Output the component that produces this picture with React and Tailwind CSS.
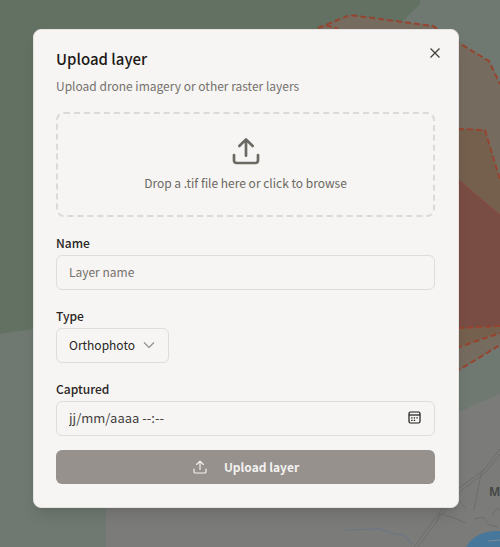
import React, { useState } from 'react';

const inputStyles = 'h-[35px] w-full rounded-md border border-[#dfddda] bg-transparent px-3 pb-[2px] text-[#292524] outline-none';

function UploadIcon({ className, strokeWidth = 2 }) {
  return (
    <svg className={className} viewBox="0 0 24 24" fill="none" stroke="currentColor" strokeWidth={strokeWidth} strokeLinecap="round" strokeLinejoin="round" aria-hidden="true">
      <path d="M3 15v4.2A1.8 1.8 0 0 0 4.8 21h14.4a1.8 1.8 0 0 0 1.8-1.8V15" />
      <path d="M12 15.5V3.5M7 8.3l5-5 5 5" />
    </svg>
  );
}

function MapBackground() {
  return (
    <svg className="absolute inset-0 h-full w-full" viewBox="0 0 500 547" preserveAspectRatio="xMidYMid slice" aria-hidden="true">
      <rect width="500" height="547" fill="#7b7c79" />
      <path d="M0 0H500V394L459 412L440 420H106V547H0Z" fill="#6f7971" />
      <path d="M0 0H420V4L400 24L340 90V310L33 329L0 334Z" fill="#637163" />

      {/* flight zones */}
      <path d="M318 28L350 15L433 26L459 43L489 61L500 84V345L440 382L330 300Z" fill="#756b5e" />
      <path d="M440 128L459 129L485 130L500 180V333L440 352Z" fill="#75604e" />
      <path d="M440 166L459 180L500 215V326L440 329Z" fill="#7a4d44" />
      <g fill="none" stroke="#96442f" strokeWidth="2" strokeDasharray="6 3">
        <path d="M318 28L350 15L433 26L459 43L489 61L500 84M326 25l12 4" />
        <path d="M440 128L459 129L485 130L500 180" />
        <path d="M440 355L459 347L500 333M440 382L459 370L500 345M440 329L500 326" />
      </g>
      <path d="M459 180L500 215" stroke="#8c4a42" strokeWidth="1" />

      {/* roads and stream */}
      <g fill="none" stroke="#6e6f6c" strokeWidth="1">
        <path d="M414 547L438 514L459 488L484 470L500 449" />
        <path d="M418 547L442 514L462 490L486 472L500 454" />
        <path d="M482 470L477 494L474 510M438 513l16 5 12 5M474 519l9-2 6 8 9 2M492 515l5-7 3 2M440 513l-4 10M458 500l8 8" />
      </g>
      <path d="M345 530l35-1 16 5 8 1 8 9" fill="none" stroke="#6f7681" strokeWidth="1.5" />
      <path d="M466 547Q476 530 500 531V547Z" fill="#47779b" />
      <path d="M488 541l12-1" stroke="#7d8b96" strokeWidth="1" />
      <text x="489" y="496" fontSize="12" fontWeight="700" fontFamily="Noto Sans" fill="#484947">M</text>
    </svg>
  );
}

function App() {
  const [values, setValues] = useState({ name: '', type: 'orthophoto', captured: '' });

  const handleChange = (event) => {
    setValues({ ...values, [event.target.id]: event.target.value });
  };

  return (
    <div className="relative min-h-screen overflow-hidden bg-[#7b7c79] pt-[29px] pr-[41px] pb-[38px] pl-[33px] font-['Noto_Sans_CJK_SC',sans-serif] text-[12px] leading-[18px]">
      <MapBackground />

      <div role="dialog" aria-labelledby="title" className="relative w-full rounded-lg border border-[#e5e3e1] bg-[#f6f5f3] pt-4 pr-[23px] pb-[23px] pl-[22px] shadow-lg">
        {/* Header */}
        <h2 id="title" className="text-[15px] leading-[26px] font-medium text-[#1c1917]">Upload layer</h2>
        <p className="mt-1 leading-5 text-[#75716c]">Upload drone imagery or other raster layers</p>
        <button type="button" aria-label="Close" className="absolute top-4 right-4 text-[#44403c]">
          <svg className="size-[14px]" viewBox="0 0 14 14" fill="none" stroke="currentColor" strokeWidth="1.3" aria-hidden="true">
            <path d="M2.5 2.5l9 9M11.5 2.5l-9 9" />
          </svg>
        </button>

        <form onSubmit={(event) => event.preventDefault()}>
          {/* Drop zone */}
          <label htmlFor="file" className="mt-4 flex h-[105px] flex-col items-center justify-center gap-[6px] rounded-lg border-2 border-dashed border-[#dcdad8] pb-[2px] text-[#6c6862]">
            <UploadIcon className="size-8" />
            <span className="leading-5">Drop a .tif file here or click to browse</span>
            <input id="file" type="file" accept=".tif" className="sr-only" />
          </label>

          <div className="mt-[17px] flex flex-col gap-[17px]">
            {/* Name */}
            <div className="flex flex-col gap-[3px]">
              <label htmlFor="name" className="font-medium text-[#292524]">Name</label>
              <input id="name" type="text" value={values.name} onChange={handleChange} className={`${inputStyles} placeholder:text-[#75716c]`} placeholder="Layer name" />
            </div>

            {/* Type */}
            <div className="flex flex-col items-start gap-[3px]">
              <label htmlFor="type" className="font-medium text-[#292524]">Type</label>
              <div className="relative">
                <select id="type" value={values.type} onChange={handleChange} className="h-[35px] w-[113px] appearance-none rounded-md border border-[#dfddda] px-3 pb-[2px] text-[#292524] outline-none">
                  <option value="orthophoto">Orthophoto</option>
                  <option value="dsm">DSM</option>
                </select>
                <svg className="pointer-events-none absolute top-[11px] right-[14px] size-3" viewBox="0 0 12 12" fill="none" stroke="#8f8b87" strokeWidth="1.1" aria-hidden="true">
                  <path d="M1 3.5l5 5 5-5" />
                </svg>
              </div>
            </div>

            {/* Captured */}
            <div className="flex flex-col gap-[3px]">
              <label htmlFor="captured" className="font-medium text-[#292524]">Captured</label>
              <div className="relative">
                <input id="captured" type="text" value={values.captured} onChange={handleChange} className={`${inputStyles} text-[13px] placeholder:text-[#44403c]`} placeholder="jj/mm/aaaa --:--" />
                <button type="button" aria-label="Pick a date" className="absolute top-[10px] right-[14px] text-[#1c1917]">
                  <svg className="size-[13px]" viewBox="0 0 13 13" fill="none" stroke="currentColor" aria-hidden="true">
                    <rect x="1" y="1" width="11" height="11" rx="1.5" strokeWidth="1.2" />
                    <path d="M1 4h11" strokeWidth="1.2" />
                    <path d="M3.2 6.8h1.3M5.8 6.8h1.3M8.4 6.8h1.3M3.2 9.3h1.3M5.8 9.3h1.3" strokeWidth="1.3" />
                  </svg>
                </button>
              </div>
            </div>
          </div>

          <button type="submit" disabled className="mt-[14px] flex h-[34px] w-full items-center justify-center gap-4 rounded-md bg-[#96918d] font-bold text-[#f3f1ef]">
            <UploadIcon className="size-4" strokeWidth={1.8} />
            Upload layer
          </button>
        </form>
      </div>
    </div>
  );
}

export default App;
